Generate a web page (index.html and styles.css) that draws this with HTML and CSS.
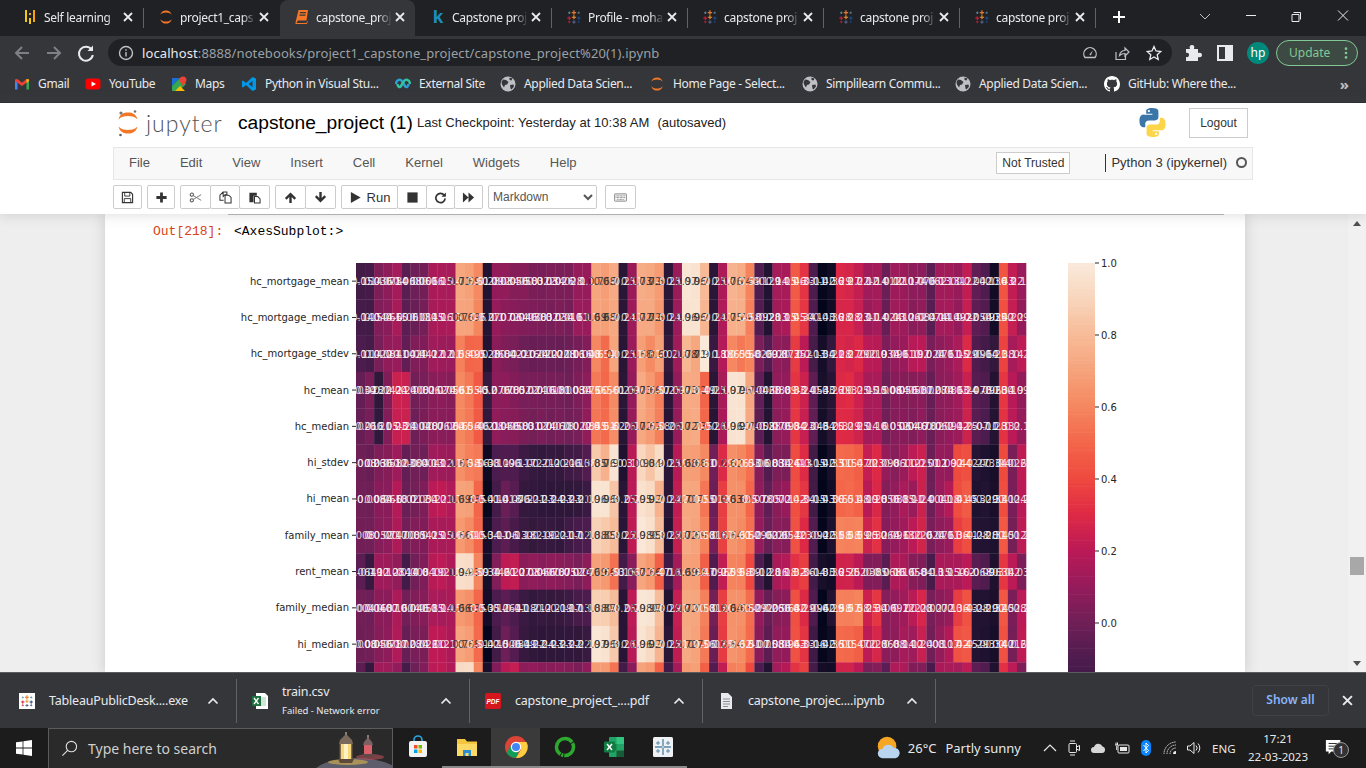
FILE: index.html
```html
<!DOCTYPE html>
<html lang="en">
<head>
    <meta charset="UTF-8">
    <title>capstone_project (1) - Jupyter Notebook</title>
    <link rel="stylesheet" href="styles.css">
</head>
<body>
    <!-- shared icons -->
    <svg class="defs" width="0" height="0">
        <symbol id="i-tableau" viewBox="0 0 18 18">
            <path d="M8.200 6.500V1.500h1.400v5zM6.400 3.400h5v1.300h-5z" fill="#e8762b"/>
            <path d="M8.300 16.500v-3.600h1.300v3.600zM7 14.100h3.900v1.200H7z" fill="#5b6591"/>
            <path d="M3 12.500V8.200h1.200v4.300zM1.500 9.700h4.200v1.200H1.500z" fill="#c72035"/>
            <path d="M13.800 12.500V8.200H15v4.300zM12.300 9.700h4.200v1.200h-4.200z" fill="#1f457e"/>
            <path d="M8.300 11.600V6.900h1.300v4.700zM6.600 8.600h4.800v1.200H6.600z" fill="#eb912b"/>
            <path d="M3.200 5.700V2.800h.9v2.900zM2.200 3.800h2.900v.9H2.200z" fill="#7099a6"/>
            <path d="M13.900 5.700V2.800h.9v2.900zM12.900 3.800h2.900v.9h-2.900z" fill="#59879b"/>
            <path d="M3.200 15.900V13h.9v2.900zM2.200 14h2.900v.9H2.200z" fill="#c72035"/>
            <path d="M13.900 15.900V13h.9v2.900zM12.900 14h2.900v.9h-2.900z" fill="#1f447e"/>
        </symbol>
        <symbol id="i-jupyter" viewBox="0 0 18 18">
            <path d="M2.500 6.600C3.500 3.200 6 1.600 9 1.600s5.500 1.600 6.500 5C14 4.800 11.800 4 9 4S4 4.800 2.500 6.600z" fill="#f37726"/>
            <path d="M2.500 11.400c1 3.400 3.500 5 6.500 5s5.500-1.600 6.500-5C14 13.200 11.800 14 9 14s-5-.8-6.500-2.600z" fill="#f37726"/>
        </symbol>
        <symbol id="i-globe" viewBox="0 0 16 16">
            <circle cx="8" cy="8" r="7.500" fill="#bdc1c6"/>
            <path d="M3 3.500l3 .5 2.500 2-1.500 2.500-2 .5-1 2.500L2 8.500 1.500 6zM9.500 1.500l3 1-1 2-2-.5zM10 9l3.500-.5.5 2-2.500 3-1-1z" fill="#35363a"/>
        </symbol>
        <symbol id="i-close" viewBox="0 0 10 10">
            <path d="M1 1l8 8M9 1L1 9" fill="none" stroke="currentColor" stroke-width="1.800"/>
        </symbol>
        <symbol id="i-caret" viewBox="0 0 12 8">
            <path d="M1.500 6.500L6 2l4.500 4.500" fill="none" stroke="currentColor" stroke-width="1.700"/>
        </symbol>
    </svg>

    <!-- browser tabs -->
    <div class="tabbar">
        <div class="tab">
            <svg class="favicon" viewBox="0 0 16 16"><rect x="3" y="1" width="2" height="12" fill="#f2c811"/><rect x="7" y="9" width="2" height="6" fill="#f2c811"/><rect x="7" y="4" width="2" height="2" fill="#e8a33d"/><rect x="11" y="1" width="2" height="12" fill="#f2a60c"/></svg>
            <span class="tab-title">Self learning</span>
            <svg class="tab-close"><use href="#i-close"/></svg>
        </div>
        <i class="tab-sep"></i>
        <div class="tab">
            <svg class="favicon"><use href="#i-jupyter"/></svg>
            <span class="tab-title">project1_caps</span>
            <svg class="tab-close"><use href="#i-close"/></svg>
        </div>
        <i class="tab-sep off"></i>
        <div class="tab active">
            <svg class="favicon" viewBox="0 0 16 16"><path d="M4.500 1H14l-1.500 10.500H4L2.500 14h9.800l1.200-2 .5.300-1.200 2.700H1.500v-1.500z" fill="#f37726"/><path d="M6 3h6l-.2 1.200h-6zM5.600 5.500h6l-.2 1.200h-6z" fill="#35363a"/></svg>
            <span class="tab-title">capstone_proj</span>
            <svg class="tab-close"><use href="#i-close"/></svg>
        </div>
        <i class="tab-sep off"></i>
        <div class="tab">
            <span class="favicon kaggle">k</span>
            <span class="tab-title">Capstone proj</span>
            <svg class="tab-close"><use href="#i-close"/></svg>
        </div>
        <i class="tab-sep"></i>
        <div class="tab">
            <svg class="favicon"><use href="#i-tableau"/></svg>
            <span class="tab-title">Profile - moha</span>
            <svg class="tab-close"><use href="#i-close"/></svg>
        </div>
        <i class="tab-sep"></i>
        <div class="tab">
            <svg class="favicon"><use href="#i-tableau"/></svg>
            <span class="tab-title">capstone proj</span>
            <svg class="tab-close"><use href="#i-close"/></svg>
        </div>
        <i class="tab-sep"></i>
        <div class="tab">
            <svg class="favicon"><use href="#i-tableau"/></svg>
            <span class="tab-title">capstone proj</span>
            <svg class="tab-close"><use href="#i-close"/></svg>
        </div>
        <i class="tab-sep"></i>
        <div class="tab">
            <svg class="favicon"><use href="#i-tableau"/></svg>
            <span class="tab-title">capstone proj</span>
            <svg class="tab-close"><use href="#i-close"/></svg>
        </div>
        <i class="tab-sep"></i>
        <svg class="new-tab" viewBox="0 0 46 36"><path d="M23 11v12M17 17h12" stroke="#fff" stroke-width="2"/></svg>
        <div class="win-controls">
            <svg viewBox="0 0 46 36"><path d="M18 14l5 5 5-5" fill="none" stroke="#bdc1c6"/></svg>
            <svg viewBox="0 0 46 36"><path d="M18 15.500h10" stroke="#e8eaed"/></svg>
            <svg viewBox="0 0 46 36"><path d="M19.500 12.500h7v7M18 14.500h7v7h-7z" fill="none" stroke="#e8eaed"/></svg>
            <svg viewBox="0 0 46 36"><path d="M18 10.500l10 10M28 10.500l-10 10" fill="none" stroke="#e8eaed"/></svg>
        </div>
    </div>

    <!-- address bar -->
    <div class="toolbar">
        <svg class="nav-btn" viewBox="0 0 32 32"><path d="M23 16H10M16 10l-6 6 6 6" fill="none" stroke="#7d8085" stroke-width="2"/></svg>
        <svg class="nav-btn" viewBox="0 0 32 32"><path d="M9 16h13M16 10l6 6-6 6" fill="none" stroke="#7d8085" stroke-width="2"/></svg>
        <svg class="nav-btn" viewBox="0 0 32 32"><path d="M21.500 12.500A7 7 0 1 0 22.800 18" fill="none" stroke="#e8eaed" stroke-width="2"/><path d="M23 8.500V14h-5.500z" fill="#e8eaed"/></svg>
        <div class="omnibox">
            <svg class="omni-info" viewBox="0 0 16 16"><circle cx="8" cy="8" r="6.500" fill="none" stroke="#bdc1c6" stroke-width="1.400"/><path d="M7.300 7h1.400v4.500H7.300zM7.300 4.300h1.400v1.400H7.300z" fill="#bdc1c6"/></svg>
            <span class="url"><b>localhost</b>:8888/notebooks/project1_capstone_project/capstone_project%20(1).ipynb</span>
            <div class="omni-actions">
                <svg viewBox="0 0 16 16"><path d="M3 12.500a6.200 6.200 0 1 1 10 0z" fill="none" stroke="#bdc1c6" stroke-width="1.300"/><path d="M7.300 9.500l3.500-4-1.900 5z" fill="#bdc1c6"/></svg>
                <svg viewBox="0 0 16 16"><path d="M2 7v7.500h9.500V11" fill="none" stroke="#bdc1c6" stroke-width="1.200"/><path d="M5.500 10.500c.5-3 2.500-5 5.500-5V3l4 4-4 4V8.500c-2.500 0-4 .5-5.500 2z" fill="none" stroke="#bdc1c6" stroke-width="1.200"/></svg>
                <svg viewBox="0 0 16 16"><path d="M8 1.500l2 4.500 4.800.5-3.600 3.200 1 4.800L8 12l-4.200 2.500 1-4.800L1.200 6.500 6 6z" fill="none" stroke="#e8eaed" stroke-width="1.300"/></svg>
            </div>
        </div>
        <svg class="nav-btn ext" viewBox="0 0 32 32"><path d="M9 12h4c-1-3 .5-4 2-4s3 1 2 4h4v4c3-1 4 .5 4 2s-1 3-4 2v4H9v-4c2 .5 3-.5 3-2s-1-2.500-3-2z" fill="#e8eaed"/></svg>
        <svg class="nav-btn" viewBox="0 0 32 32"><path d="M9 9h14v14H9z" fill="none" stroke="#e8eaed" stroke-width="2"/><path d="M16 9h7v14h-7z" fill="#e8eaed"/></svg>
        <span class="avatar">hp</span>
        <div class="update-btn">Update<svg viewBox="0 0 4 16"><circle cx="2" cy="3" r="1.500"/><circle cx="2" cy="8" r="1.500"/><circle cx="2" cy="13" r="1.500"/></svg></div>
    </div>

    <!-- bookmarks -->
    <div class="bookmarks">
        <a class="bm">
            <svg viewBox="0 0 16 16"><path d="M1 3.500v10h2.500V7z" fill="#4285f4"/><path d="M12.500 7v6.500H15v-10z" fill="#34a853"/><path d="M1 3.500L3.500 3 8 6.800 12.500 3l2.500.5v1.500L8 10 1 5z" fill="#ea4335"/><path d="M12.500 3L15 3.500V5l-2.500 2z" fill="#fbbc04"/></svg>
            Gmail
        </a>
        <a class="bm">
            <svg viewBox="0 0 16 16"><rect x="0.500" y="2.500" width="15" height="11" rx="3" fill="#f00"/><path d="M6.500 5.500L11 8l-4.500 2.500z" fill="#fff"/></svg>
            YouTube
        </a>
        <a class="bm">
            <svg viewBox="0 0 16 16"><path d="M1 2h8L1 10z" fill="#1a73e8" opacity=".9"/><path d="M1 10l8-8 6 6-7 7H1z" fill="#34a853"/><path d="M4 15l5-5 5 5z" fill="#fbbc04"/><path d="M12 0.500a3.500 3.500 0 0 1 3.500 3.500c0 2-2 3.500-3.500 6-1.500-2.500-3.500-4-3.500-6A3.500 3.500 0 0 1 12 .5z" fill="#ea4335"/></svg>
            Maps
        </a>
        <a class="bm">
            <svg viewBox="0 0 16 16"><path d="M11.500 1L15 2.500v11L11.500 15 5 9l-3 2.500L1 11V5l1-.5L5 7z" fill="#0098e6"/><path d="M11.500 5L7.800 8l3.700 3z" fill="#35363a"/></svg>
            Python in Visual Stu...
        </a>
        <a class="bm">
            <svg viewBox="0 0 16 16"><path d="M1 8a3.500 4.500 0 0 1 6.500-2L10 10a2 3 0 0 0 3.500-2" fill="none" stroke="#2a9fd8" stroke-width="2.500"/><path d="M15 8a3.500 4.500 0 0 0-6.500-2L6 10a2 3 0 0 1-3.500-2" fill="none" stroke="#34c3a0" stroke-width="2.500"/></svg>
            External Site
        </a>
        <a class="bm"><svg><use href="#i-globe"/></svg>Applied Data Scien...</a>
        <a class="bm"><svg><use href="#i-jupyter"/></svg>Home Page - Select...</a>
        <a class="bm"><svg><use href="#i-globe"/></svg>Simplilearn Commu...</a>
        <a class="bm"><svg><use href="#i-globe"/></svg>Applied Data Scien...</a>
        <a class="bm">
            <svg viewBox="0 0 16 16"><path fill="#fff" d="M8 0C3.580 0 0 3.580 0 8c0 3.540 2.290 6.530 5.470 7.590.4.070.55-.17.55-.38 0-.19-.01-.82-.01-1.490-2.010.37-2.530-.49-2.690-.94-.09-.23-.48-.94-.82-1.130-.28-.15-.68-.52-.01-.53.63-.01 1.080.58 1.230.82.72 1.210 1.870.87 2.330.66.07-.52.28-.87.51-1.070-1.780-.2-3.640-.89-3.640-3.950 0-.87.31-1.590.82-2.150-.08-.2-.36-1.020.08-2.120 0 0 .67-.21 2.200.82.64-.18 1.320-.27 2-.27.68 0 1.360.09 2 .27 1.530-1.040 2.200-.82 2.200-.82.44 1.100.16 1.920.08 2.120.51.56.82 1.270.82 2.150 0 3.070-1.870 3.750-3.650 3.950.29.25.54.73.54 1.480 0 1.070-.01 1.930-.01 2.200 0 .21.15.46.55.38A8.013 8.013 0 0016 8c0-4.420-3.580-8-8-8z"/></svg>
            GitHub: Where the...
        </a>
        <span class="bm-more">»</span>
    </div>

    <!-- jupyter header -->
    <header class="nb-header">
        <div class="nb-title-row">
            <svg class="jp-logo" viewBox="0 0 22 30">
                <path d="M1.500 11.500C3 6 6.500 4.500 11 4.500s8 1.500 9.500 7C18 8.800 15 8 11 8s-7 .8-9.500 3.500z" fill="#f37726"/>
                <path d="M1.500 18.500C3 24 6.500 25.500 11 25.500s8-1.500 9.500-7C18 21.200 15 22 11 22s-7-.8-9.500-3.500z" fill="#f37726"/>
                <circle cx="18" cy="3.500" r="1.300" fill="#767677"/><circle cx="4" cy="5" r="1.600" fill="#767677"/><circle cx="3.500" cy="27" r="1.300" fill="#616262"/>
            </svg>
            <span class="jp-word">jupyter</span>
            <span class="nb-name">capstone_project (1)</span>
            <span class="nb-check">Last Checkpoint: Yesterday at 10:38 AM</span>
            <span class="nb-saved">(autosaved)</span>
            <svg class="py-logo" viewBox="0 0 28 28">
                <path d="M13.800 0C7.500 0 7.900 2.700 7.900 2.700v2.800h6v.9H5.500S1.400 5.900 1.400 12.300s3.500 6.200 3.500 6.200H7v-3s-.1-3.500 3.500-3.500h5.900s3.300.1 3.300-3.200V3.400S20.300 0 13.800 0zM10.500 1.900a1.100 1.100 0 1 1 0 2.200 1.100 1.100 0 0 1 0-2.200z" fill="#3a76a8"/>
                <path d="M14.200 28c6.300 0 5.900-2.700 5.900-2.700v-2.800h-6v-.9h8.400s4.100.5 4.100-5.900-3.500-6.200-3.500-6.200H21v3s.1 3.500-3.500 3.500h-5.900s-3.300-.1-3.300 3.200v5.400S7.700 28 14.200 28zm3.300-1.900a1.100 1.100 0 1 1 0-2.200 1.100 1.100 0 0 1 0 2.200z" fill="#fdd548"/>
            </svg>
            <button class="logout">Logout</button>
        </div>
        <div class="menubar">
            <span class="menu-item">File</span>
            <span class="menu-item">Edit</span>
            <span class="menu-item">View</span>
            <span class="menu-item">Insert</span>
            <span class="menu-item">Cell</span>
            <span class="menu-item">Kernel</span>
            <span class="menu-item">Widgets</span>
            <span class="menu-item">Help</span>
            <span class="trust">Not Trusted</span>
            <span class="kernel">Python 3 (ipykernel)</span>
            <i class="kernel-dot"></i>
        </div>
        <div class="nb-tools">
            <div class="btn-group"><button class="tool w29"><svg viewBox="0 0 14 14"><path d="M1.500 1.500h9l2 2v9h-11z" fill="none" stroke="#333" stroke-width="1.200"/><path d="M4 2v3.500h5.500V2M3.500 12V8.200h7V12" fill="none" stroke="#333"/></svg></button></div>
            <div class="btn-group"><button class="tool w28"><svg viewBox="0 0 14 14"><path d="M5.500 1.500h3v4h4v3h-4v4h-3v-4h-4v-3h4z" fill="#333"/></svg></button></div>
            <div class="btn-group">
                <button class="tool w31"><svg viewBox="0 0 16 14"><circle cx="3.500" cy="3.500" r="2" fill="none" stroke="#555" stroke-width="1.300"/><circle cx="3.500" cy="10.500" r="2" fill="none" stroke="#555" stroke-width="1.300"/><path d="M5 4.500l10 6M5 9.500l10-6" stroke="#777" stroke-width="1.200"/></svg></button>
                <button class="tool w30"><svg viewBox="0 0 14 14"><path d="M4.500 1h4v3H6.500L4.500 6v-5zM4.500 1L1 4.500V10h4" fill="none" stroke="#333" stroke-width="1.100"/><path d="M6.500 4.500h4l2.500 2.500v6H6.500z" fill="#fff" stroke="#333" stroke-width="1.100"/></svg></button>
                <button class="tool w31"><svg viewBox="0 0 14 14"><path d="M1.500 2h8v3H6v7H1.500z" fill="#333"/><path d="M7 6h3.500l2.500 2.500V13H7z" fill="#fff" stroke="#333" stroke-width="1.100"/></svg></button>
            </div>
            <div class="btn-group">
                <button class="tool w31"><svg viewBox="0 0 14 14"><path d="M7 1.500L13 7.500l-1.800 1.800L8.300 6.500V13H5.700V6.500L2.800 9.300 1 7.500z" fill="#333"/></svg></button>
                <button class="tool w31"><svg viewBox="0 0 14 14"><path d="M7 12.500L13 6.500l-1.800-1.800-2.900 2.800V1H5.700v6.500L2.800 4.700 1 6.500z" fill="#333"/></svg></button>
            </div>
            <div class="btn-group">
                <button class="tool run"><svg viewBox="0 0 12 14"><path d="M1 1l10.500 6L1 13z" fill="#333"/></svg>Run</button>
                <button class="tool w30"><svg viewBox="0 0 14 14"><rect x="1.500" y="1.500" width="11" height="11" fill="#333"/></svg></button>
                <button class="tool w29"><svg viewBox="0 0 14 14"><path d="M11 4.500A5 5 0 1 0 12 8" fill="none" stroke="#333" stroke-width="1.800"/><path d="M12.800 1.500v4.700H8.100z" fill="#333"/></svg></button>
                <button class="tool w29"><svg viewBox="0 0 14 14"><path d="M1 1.500l6 5.500-6 5.500zM7 1.500l6 5.500-6 5.500z" fill="#333"/></svg></button>
            </div>
            <select class="cell-type"><option>Markdown</option></select>
            <div class="btn-group keyboard"><button class="tool w31"><svg viewBox="0 0 16 10"><rect x="0.500" y="0.500" width="15" height="9" rx="1" fill="#eee" stroke="#777"/><path d="M2 3h12M2 5h12M4 7.500h8" stroke="#777" stroke-dasharray="1 .7"/></svg></button></div>
        </div>
    </header>

    <!-- notebook body -->
    <main class="nb-body">
        <div class="nb-scroll">
            <div class="nb-page">
                <div class="cell-edge"></div>
                <div class="out-row">
                    <span class="out-prompt">Out[218]:</span>
                    <span class="out-text">&lt;AxesSubplot:&gt;</span>
                </div>
                <svg id="heatmap" class="heatmap" width="880" height="470"></svg>
            </div>
        </div>
        <div class="scrollbar">
            <i class="arrow up"></i>
            <i class="thumb"></i>
            <i class="arrow down"></i>
        </div>
    </main>

    <!-- downloads shelf -->
    <div class="shelf">
        <div class="dl">
            <svg class="dl-icon" viewBox="0 0 18 18"><rect x="1" y="1" width="16" height="16" fill="#fff"/><use href="#i-tableau" x="2" y="2" width="14" height="14"/></svg>
            <span class="dl-name">TableauPublicDesk....exe</span>
            <svg class="dl-caret"><use href="#i-caret"/></svg>
        </div>
        <div class="dl">
            <svg class="dl-icon" viewBox="0 0 18 18"><path d="M5 1h9l3 3v13H5z" fill="#fff"/><rect x="9" y="5" width="6" height="9" fill="#cfe5d6"/><rect x="1" y="4" width="9" height="10" fill="#1d6f42"/><path d="M3 6l4.500 6M7.500 6L3 12" stroke="#fff" stroke-width="1.300"/></svg>
            <div class="dl-stack">
                <span class="dl-file">train.csv</span>
                <span class="dl-error">Failed - Network error</span>
            </div>
            <svg class="dl-caret"><use href="#i-caret"/></svg>
        </div>
        <div class="dl">
            <svg class="dl-icon" viewBox="0 0 18 18"><rect x="1" y="1" width="16" height="16" rx="2" fill="#d5171d"/><text x="9" y="11.500" class="pdf-mark">PDF</text></svg>
            <span class="dl-name">capstone_project_....pdf</span>
            <svg class="dl-caret"><use href="#i-caret"/></svg>
        </div>
        <div class="dl">
            <svg class="dl-icon" viewBox="0 0 18 18"><path d="M4 1h7l4 4v12H4z" fill="#e8eaed"/><path d="M6 7h7M6 9.500h7M6 12h7M6 14.500h5" stroke="#80868b" stroke-width=".9"/></svg>
            <span class="dl-name">capstone_projec....ipynb</span>
            <svg class="dl-caret"><use href="#i-caret"/></svg>
        </div>
        <span class="show-all">Show all</span>
        <svg class="shelf-close"><use href="#i-close"/></svg>
    </div>

    <!-- windows taskbar -->
    <div class="taskbar">
        <div class="start">
            <svg viewBox="0 0 16 16"><path d="M0 2.300l6.600-.9v6.200H0zM7.400 1.300L16 0v7.600H7.400zM0 8.400h6.600v6.200L0 13.700zM7.400 8.400H16V16l-8.600-1.300z" fill="#fff"/></svg>
        </div>
        <div class="search">
            <svg class="search-icon" viewBox="0 0 18 18"><circle cx="11" cy="7" r="5.500" fill="none" stroke="#ddd" stroke-width="1.200"/><path d="M7 11l-5.500 5.500" stroke="#ddd" stroke-width="1.200"/></svg>
            <span>Type here to search</span>
            <svg class="lanterns" viewBox="0 0 78 39">
                <ellipse cx="42" cy="44" rx="42" ry="15" fill="#5d5d6b"/>
                <ellipse cx="34" cy="33" rx="20" ry="3" fill="#c9a94f" opacity=".7"/>
                <ellipse cx="56" cy="28" rx="14" ry="3" fill="#b5505a" opacity=".6"/>
                <path d="M32 5l6 6 1 4H25l1-4z" fill="#7a6a5c"/><rect x="31" y="3" width="2" height="3" fill="#8d7d6e"/>
                <rect x="26" y="15" width="12" height="15" fill="#f6d77c"/><rect x="30" y="15" width="4" height="15" fill="#fff3c4"/>
                <path d="M26 15v15M38 15v15" stroke="#5d4a3a" stroke-width="1.500"/>
                <path d="M24 30h16l-2 4H26z" fill="#5d4a3a"/>
                <path d="M54 8l4 5 1 3H49l1-3z" fill="#7a6060"/><rect x="53" y="6" width="2" height="3" fill="#8d7575"/>
                <rect x="50" y="16" width="8" height="9" fill="#d9606a"/><path d="M48.500 25h11l-1.500 3h-8z" fill="#5f4848"/>
            </svg>
        </div>
        <div class="task-icon">
            <svg viewBox="0 0 24 24"><path d="M8 7V5a4 4 0 0 1 8 0v2" fill="none" stroke="#29a8e0" stroke-width="1.600"/><rect x="3" y="6" width="18" height="16" rx="2" fill="#f3f3f3"/><rect x="8" y="10" width="3.500" height="3.500" fill="#f25022"/><rect x="12.500" y="10" width="3.500" height="3.500" fill="#7fba00"/><rect x="8" y="14.500" width="3.500" height="3.500" fill="#00a4ef"/><rect x="12.500" y="14.500" width="3.500" height="3.500" fill="#ffb900"/></svg>
        </div>
        <div class="task-icon running">
            <svg viewBox="0 0 24 24"><path d="M2 4h8l2 2.500h10V21H2z" fill="#f4c53f"/><path d="M2 9h20v12H2z" fill="#fbd965"/><path d="M8 21v-6h8v6h-2.500v-3h-3v3z" fill="#2a8dd4"/></svg>
        </div>
        <div class="task-icon running active">
            <svg viewBox="0 0 24 24"><circle cx="12" cy="12" r="11" fill="#db4437"/><path d="M12 23a11 11 0 0 1-9.500-5.500L8 8.500l4 7.500h3z" fill="#0f9d58"/><path d="M12 7h10.500A11 11 0 0 1 12 23l5-8.500z" fill="#ffcd40"/><circle cx="12" cy="12" r="5.200" fill="#fff"/><circle cx="12" cy="12" r="4" fill="#4285f4"/></svg>
        </div>
        <div class="task-icon running">
            <svg viewBox="0 0 24 24"><circle cx="12" cy="12" r="8.500" fill="none" stroke="#2fa82f" stroke-width="3.500" stroke-dasharray="14 1 2 1 30 1"/></svg>
        </div>
        <div class="task-icon running">
            <svg viewBox="0 0 24 24"><rect x="7" y="2" width="15" height="20" rx="1" fill="#21a366"/><path d="M14.500 2H21a1 1 0 0 1 1 1v6h-7.500z" fill="#33c481"/><path d="M14.500 15.500H22V21a1 1 0 0 1-1 1h-6.500z" fill="#185c37"/><rect x="7" y="9" width="7.500" height="6.500" fill="#107c41"/><rect x="2" y="6.500" width="11" height="11" rx="1" fill="#107c41"/><path d="M5 9l5 6M10 9l-5 6" stroke="#fff" stroke-width="1.500"/></svg>
        </div>
        <div class="task-icon running">
            <svg viewBox="0 0 24 24"><rect x="2" y="2" width="20" height="20" rx="1.500" fill="#eef2f5"/><path d="M11.300 4v16h1.400V4zM4 11.300h16v1.400H4z" fill="#5b88a8"/><path d="M7 6v4M5 8h4M17 6v4M15 8h4M7 14v4M5 16h4M17 14v4M15 16h4" stroke="#5b88a8"/></svg>
        </div>
        <div class="tray">
            <svg class="weather" viewBox="0 0 28 28"><circle cx="13" cy="12" r="10" fill="#f5a623"/><path d="M8 25a5 5 0 0 1 0-10 6.500 6.500 0 0 1 12-1 5.500 5.500 0 0 1 2 11z" fill="#b9d4ef"/></svg>
            <span class="temp">26°C</span>
            <span class="cond">Partly sunny</span>
            <svg class="tray-icon" viewBox="0 0 16 16"><path d="M2 11l6-6 6 6" fill="none" stroke="#e8e8e8" stroke-width="1.200"/></svg>
            <svg class="tray-icon" viewBox="0 0 16 16"><rect x="3" y="3.500" width="7.500" height="9" rx="1" fill="none" stroke="#e8e8e8"/><path d="M10.500 7l3-1.500v5l-3-1.500zM4 1h5M4 15h5" fill="none" stroke="#e8e8e8"/></svg>
            <svg class="tray-icon" viewBox="0 0 16 16"><path d="M4 13a3 3 0 0 1 0-6 4.500 4.500 0 0 1 8.500-.5A3.300 3.300 0 0 1 12 13z" fill="#d6d6d6"/></svg>
            <svg class="tray-icon" viewBox="0 0 16 16"><rect x="4" y="5" width="11" height="8" rx="1" fill="none" stroke="#e8e8e8"/><rect x="6" y="7" width="7" height="4" fill="#e8e8e8"/><path d="M1 5h3M2 2.500V5M3.500 2.500V5M2.700 6v4" stroke="#e8e8e8"/></svg>
            <svg class="tray-icon" viewBox="0 0 16 16"><rect x="3" y="0" width="10" height="16" rx="5" fill="#0a84ff"/><path d="M5.500 5l5 5.500L8 13V3l2.500 2.500-5 5.500" fill="none" stroke="#fff"/></svg>
            <svg class="tray-icon" viewBox="0 0 16 16"><path d="M2 14a12 12 0 0 1 12-12M5 14a9 9 0 0 1 9-9M8 14a6 6 0 0 1 6-6" fill="none" stroke="#cfcfcf" stroke-dasharray="1.500 .6"/><path d="M11 14a3 3 0 0 1 3-3v3z" fill="#e8e8e8"/></svg>
            <svg class="tray-icon" viewBox="0 0 16 16"><path d="M1.500 6h2.500L8 2.500v11L4 10H1.500z" fill="none" stroke="#e8e8e8"/><path d="M10 5.500a3.500 3.500 0 0 1 0 5M12 3.500a6.500 6.500 0 0 1 0 9" fill="none" stroke="#e8e8e8"/></svg>
            <span class="lang">ENG</span>
            <div class="clock"><span>17:21</span><span>22-03-2023</span></div>
            <div class="notif">
                <svg viewBox="0 0 20 20"><path d="M1 1h16v13H7l-3 3v-3H1z" fill="#fff"/><path d="M4 5h10M4 8h10M4 11h7" stroke="#1c1c1c"/></svg>
                <span class="badge">1</span>
            </div>
        </div>
    </div>

    <script src="heatmap.js"></script>
</body>
</html>
```

FILE: styles.css
```css
* {
    box-sizing: border-box;
}
body {
    margin: 0;
    height: 100vh;
    display: flex;
    flex-direction: column;
    overflow: hidden;
    font-family: "Noto Sans", sans-serif;
    font-size: 12px;
    color: #e8eaed;
    background: #eee;
}
.defs {
    display: block;
    height: 0;
}

/* browser tabs */
.tabbar {
    height: 36px;
    flex: none;
    display: flex;
    align-items: stretch;
    padding-left: 8px;
    background: #202124;
}
.tab {
    width: 135px;
    display: flex;
    align-items: center;
    padding: 0 0 2px 14px;
    border-radius: 8px 8px 0 0;
}
.tab.active {
    background: #35363a;
}
.tab-sep {
    width: 1px;
    height: 20px;
    align-self: center;
    background: #5f6368;
}
.tab-sep.off {
    background: transparent;
}
.favicon {
    width: 16px;
    height: 16px;
    flex: none;
}
.kaggle {
    color: #1b8fbf;
    font: bold 19px/16px "Liberation Sans", sans-serif;
    text-align: center;
}
.tab-title {
    width: 76px;
    margin-left: 6px;
    white-space: nowrap;
    overflow: hidden;
    letter-spacing: -0.3px;
    -webkit-mask-image: linear-gradient(90deg, #000 82%, transparent);
    mask-image: linear-gradient(90deg, #000 82%, transparent);
}
.tab-close {
    width: 10px;
    height: 10px;
    margin-left: 3px;
    color: #e8eaed;
}
.new-tab {
    width: 46px;
    height: 36px;
}
.win-controls {
    margin-left: auto;
    display: flex;
}
.win-controls svg {
    width: 46px;
    height: 36px;
}

/* address bar */
.toolbar {
    height: 33px;
    flex: none;
    display: flex;
    align-items: center;
    padding-left: 6px;
    background: #35363a;
}
.nav-btn {
    width: 32px;
    height: 32px;
    flex: none;
}
.omnibox {
    width: 1064px;
    height: 27px;
    margin-left: 6px;
    display: flex;
    align-items: center;
    padding-left: 10px;
    border-radius: 14px;
    background: #202124;
}
.omni-info {
    width: 16px;
    height: 16px;
}
.url {
    margin-left: 8px;
    font-size: 13px;
    color: #9aa0a6;
    letter-spacing: 0.1px;
    white-space: nowrap;
}
.url b {
    font-weight: 400;
    color: #e8eaed;
}
.omni-actions {
    margin-left: auto;
    display: flex;
    gap: 16px;
    padding-right: 10px;
}
.omni-actions svg {
    width: 16px;
    height: 16px;
}
.nav-btn.ext {
    margin-left: 5px;
}
.avatar {
    width: 22px;
    height: 22px;
    margin-left: 6px;
    border-radius: 50%;
    background: #00897b;
    color: #fff;
    font-size: 12px;
    line-height: 21px;
    text-align: center;
}
.update-btn {
    width: 82px;
    height: 26px;
    margin-left: 7px;
    display: flex;
    align-items: center;
    justify-content: space-between;
    padding: 0 9px 0 12px;
    border: 1px solid #81c995;
    border-radius: 13px;
    background: #3d4a43;
    color: #81c995;
}
.update-btn svg {
    width: 4px;
    height: 14px;
    fill: #81c995;
}

/* bookmarks */
.bookmarks {
    height: 34px;
    flex: none;
    display: grid;
    grid-template-columns: 71px 86px 70px 154px 105px 149px 153px 153px 149px 215px 1fr;
    align-items: center;
    padding: 0 0 4px 14px;
    background: #35363a;
    border-bottom: 1px solid #2b2c2f;
}
.bm {
    display: flex;
    align-items: center;
    gap: 8px;
    white-space: nowrap;
    letter-spacing: -0.32px;
    color: #e8eaed;
}
.bm svg {
    width: 16px;
    height: 16px;
    flex: none;
}
.bm-more {
    justify-self: end;
    margin-right: 17px;
    font-size: 15px;
    font-weight: 700;
    color: #bdc1c6;
}

/* jupyter header */
.nb-header {
    height: 111px;
    flex: none;
    position: relative;
    z-index: 2;
    background: #fff;
    color: #333;
    font-family: "Liberation Sans", Arial, sans-serif;
    box-shadow: 0 0 12px 1px rgba(87, 87, 87, 0.2);
}
.nb-title-row {
    height: 44px;
    display: flex;
    align-items: center;
    padding: 0 0 5px 117px;
}
.jp-logo {
    width: 22px;
    height: 30px;
}
.jp-word {
    width: 92px;
    margin-left: 7px;
    font: 300 23px "Lato", sans-serif;
    letter-spacing: 1px;
    color: #555;
}
.nb-name {
    font-size: 19.2px;
    color: #000;
}
.nb-check {
    margin-left: 4px;
    font-size: 13px;
    letter-spacing: 0.05px;
    color: #222;
}
.nb-saved {
    margin-left: 8px;
    font-size: 13px;
    color: #222;
}
.py-logo {
    width: 29px;
    height: 29px;
    margin-left: auto;
}
.logout {
    width: 59px;
    height: 30px;
    margin: 0 118px 0 22px;
    border: 1px solid #ccc;
    background: #fff;
    color: #333;
    font: 12px "Liberation Sans", sans-serif;
}
.menubar {
    width: 1140px;
    height: 33px;
    margin-left: 113px;
    display: flex;
    align-items: center;
    padding-bottom: 2px;
    border: 1px solid #e7e7e7;
    background: #f8f8f8;
    font-size: 13px;
    color: #555;
}
.menu-item {
    margin: 0 15px;
}
.trust {
    margin-left: auto;
    padding: 3px 5px;
    border: 1px solid #ccc;
    background: #fff;
    font-size: 12px;
    color: #333;
}
.kernel {
    margin-left: 35px;
    padding-left: 5px;
    border-left: 1px solid #333;
    color: #333;
    line-height: 18px;
    font-size: 13px;
    white-space: nowrap;
}
.kernel-dot {
    width: 11px;
    height: 11px;
    margin: 0 5px 0 9px;
    border: 2px solid #555;
    border-radius: 50%;
}
.nb-tools {
    display: flex;
    align-items: center;
    gap: 5px;
    margin: 5px 0 0 113px;
}
.btn-group {
    display: flex;
}
.btn-group.keyboard {
    margin-left: 3px;
}
.tool {
    height: 24px;
    display: flex;
    align-items: center;
    justify-content: center;
    gap: 5px;
    padding: 0;
    margin-right: -1px;
    border: 1px solid #ccc;
    border-radius: 2px;
    background: #fff;
    color: #333;
    font: 13px "Liberation Sans", sans-serif;
}
.tool:last-child {
    margin-right: 0;
}
.tool svg {
    width: 13px;
    height: 13px;
}
.w28 {
    width: 28px;
}
.w29 {
    width: 29px;
}
.w30 {
    width: 30px;
}
.w31 {
    width: 31px;
}
.tool.run {
    width: 57px;
}
.cell-type {
    width: 109px;
    height: 24px;
    border: 1px solid #ccc;
    border-radius: 2px;
    background: #fff;
    color: #555;
    font: 12px "Liberation Sans", sans-serif;
}

/* notebook body */
.nb-body {
    flex: 1;
    min-height: 0;
    display: flex;
}
.nb-scroll {
    flex: 1;
    overflow: hidden;
    padding-left: 105px;
}
.nb-page {
    width: 1140px;
    height: 100%;
    padding-left: 123px;
    background: #fff;
    box-shadow: 0 0 12px 1px rgba(87, 87, 87, 0.2);
}
.cell-edge {
    width: 996px;
    height: 1px;
    background: #bbb;
}
.out-row {
    margin-left: -75px;
    padding-top: 8px;
    display: flex;
    font: 13px/17px "Liberation Mono", monospace;
    color: #000;
}
.out-prompt {
    width: 81px;
    color: #d84315;
}
.heatmap {
    display: block;
    margin: 15px 0 0 6px;
    overflow: visible;
}
.heatmap text {
    font-family: "DejaVu Sans", sans-serif;
    font-size: 10px;
}
.scrollbar {
    width: 18px;
    flex: none;
    display: flex;
    flex-direction: column;
    align-items: center;
    padding: 7px 0 6px;
    background: #f1f1f1;
}
.arrow {
    width: 0;
    height: 0;
    border-left: 4px solid transparent;
    border-right: 4px solid transparent;
}
.arrow.up {
    border-bottom: 5px solid #505050;
}
.arrow.down {
    margin-top: auto;
    border-top: 5px solid #505050;
}
.thumb {
    width: 14px;
    height: 18px;
    margin-top: 331px;
    background: #a8a8a8;
}

/* downloads shelf */
.shelf {
    height: 56px;
    flex: none;
    position: relative;
    z-index: 2;
    display: flex;
    align-items: center;
    padding-left: 4px;
    background: #35363a;
    border-top: 1px solid #5a5b5e;
}
.dl {
    width: 233px;
    height: 44px;
    display: flex;
    align-items: center;
    padding-left: 14px;
    border-right: 1px solid #5f6368;
}
.dl-icon {
    width: 18px;
    height: 18px;
    flex: none;
}
.pdf-mark {
    fill: #fff;
    font: italic bold 6.500px "Liberation Sans", sans-serif;
    text-anchor: middle;
}
.dl-name {
    margin-left: 13px;
    font-size: 12.500px;
    white-space: nowrap;
    letter-spacing: -0.2px;
}
.dl-stack {
    margin-left: 13px;
    display: flex;
    flex-direction: column;
    gap: 4px;
    padding-bottom: 2px;
}
.dl-file {
    font-size: 12.500px;
    letter-spacing: -0.2px;
}
.dl-error {
    font-size: 9.500px;
}
.dl-caret {
    width: 12px;
    height: 8px;
    margin: 0 17px 0 auto;
    color: #e8eaed;
}
.show-all {
    width: 77px;
    height: 31px;
    margin-left: auto;
    border: 1px solid #3f4145;
    border-radius: 4px;
    color: #8ab4f8;
    font-weight: 600;
    line-height: 28px;
    text-align: center;
}
.shelf-close {
    width: 11px;
    height: 11px;
    margin: 0 13px;
    color: #e8eaed;
}

/* windows taskbar */
.taskbar {
    height: 40px;
    flex: none;
    display: flex;
    align-items: stretch;
    background: #1c1c1c;
    color: #e8e8e8;
}
.start {
    width: 48px;
    display: flex;
    align-items: center;
    justify-content: center;
}
.start svg {
    width: 16px;
    height: 16px;
}
.search {
    width: 345px;
    display: flex;
    align-items: center;
    padding-left: 12px;
    border: 1px solid #5c5c5c;
    border-bottom: 0;
    background: #2a2a2a;
    overflow: hidden;
    font-size: 14px;
    color: #cfcfcf;
}
.search-icon {
    width: 17px;
    height: 17px;
    margin-right: 10px;
}
.lanterns {
    width: 78px;
    height: 39px;
    margin-left: auto;
    flex: none;
}
.task-icon {
    width: 49px;
    display: flex;
    align-items: center;
    justify-content: center;
    border-bottom: 2px solid transparent;
}
.task-icon svg {
    width: 24px;
    height: 24px;
}
.task-icon.running {
    border-bottom-color: #8a8a8a;
}
.task-icon.active {
    background: #3a3a3a;
}
.tray {
    margin-left: auto;
    display: flex;
    align-items: center;
}
.weather {
    width: 26px;
    height: 26px;
}
.temp {
    margin-left: 7px;
    font-size: 13px;
}
.cond {
    margin: 0 17px 0 9px;
    font-size: 13px;
}
.tray-icon {
    width: 24px;
    height: 16px;
}
.lang {
    width: 24px;
    margin-left: 6px;
    font-size: 11.500px;
}
.clock {
    width: 76px;
    margin-left: 4px;
    padding-bottom: 1px;
    display: flex;
    flex-direction: column;
    gap: 3px;
    align-items: center;
    font-size: 11.500px;
    line-height: 15px;
}
.notif {
    width: 50px;
    display: flex;
    align-items: center;
    padding-left: 9px;
    position: relative;
}
.notif svg {
    width: 18px;
    height: 18px;
}
.badge {
    position: absolute;
    left: 17px;
    top: 3px;
    width: 16px;
    height: 16px;
    border: 1px solid #999;
    border-radius: 50%;
    background: #333;
    font-size: 10px;
    line-height: 14px;
    text-align: center;
}
```

FILE: heatmap.js
```js
// correlation heatmap, values read off per row group
const A = [-.14,-.14,.04,.07,.14,-.06,-.01,.01,.15,.15,.15,.71,.69,.6,-.28,.1,.08,.06,.05,.03,.03,.03,.03,.02,.1,.11,.7,.68,.72,-.25,.12,.73,.72,.66,-.25,.12,.97,.96,.78,-.25,.17,.76,.74,.58,-.1,-.28,.14,.15,.45,.33,-.1,-.42,-.36,.28,.27,.23,.12,.14,-.02,.12,.12,.07,.08,-.07,.13,.14,.1,.22,-.05,-.1,-.35,.43,.22,.1];
const B = [-.12,-.14,.03,.08,.11,-.05,.04,.05,.12,.12,.1,.58,.5,.5,-.28,.06,.04,.03,-.02,-.02,-.03,-.02,-.02,-.02,.02,.04,.6,.52,.7,-.25,.1,.68,.62,.68,-.2,.12,.78,.72,.98,-.18,.17,.6,.56,.58,.03,-.1,.08,.08,.35,.2,-.14,-.34,-.2,.28,.27,.28,.2,.2,.03,.1,.1,.19,.21,.02,.08,.1,.15,.3,-.1,-.14,-.22,.38,.15,.2];
const C = [-.03,.02,-.22,.05,.24,.24,0,.02,.07,.07,.06,.6,.55,.46,-.2,.08,.07,.05,.03,.02,.02,.01,.01,0,.03,.08,.55,.5,.62,-.25,.1,.72,.66,.58,-.25,.1,.72,.72,.5,-.25,.15,.96,.96,.72,-.05,-.28,.08,.09,.34,.24,-.05,-.34,-.26,.3,.3,.25,.14,.15,0,.06,.06,.05,.07,-.02,.07,.09,.12,.24,-.07,-.1,-.28,.33,.19,.1];
const D = [0,-.03,.04,.05,.12,-.03,0,0,.12,.12,.12,.62,.58,.55,-.38,-.1,-.1,-.1,-.18,-.2,-.2,-.2,-.2,-.17,-.15,-.08,.85,.76,.96,-.3,.2,.9,.84,.92,-.25,.2,.68,.68,.6,0,.3,.62,.6,.52,.06,-.08,.03,.03,.4,.3,-.14,-.42,-.33,.5,.5,.48,.22,.3,.09,.06,.12,.2,.25,-.02,.1,.1,.4,.42,-.28,-.3,-.33,.4,.03,.2];
const E = [0,0,.06,.07,.17,-.02,.02,.03,.2,.2,.17,.7,.68,.5,-.42,-.14,-.01,-.08,-.2,-.22,-.23,-.23,-.23,-.23,-.22,-.18,.97,.96,.84,-.26,.2,.96,.92,.76,-.25,.22,.72,.7,.55,-.02,.36,.64,.62,.5,.07,-.05,.08,.1,.42,.33,-.15,-.42,-.36,.5,.5,.48,.2,.28,.06,.08,.15,.12,.24,0,.1,.18,.42,.45,-.3,-.3,-.33,.42,.02,.2];
const F = [0,0,.06,.07,.17,0,.05,.05,.15,.15,.15,.66,.62,.5,-.34,-.12,-.06,-.12,-.18,-.2,-.2,-.2,-.2,-.17,-.12,-.12,.88,.86,.8,-.25,.2,.98,.96,.8,-.28,.22,.72,.7,.58,.02,.36,.64,.62,.52,.1,-.03,.06,.06,.42,.3,-.1,-.42,-.3,.58,.58,.58,.25,.33,.06,.1,.12,.2,.27,.02,.08,.1,.36,.42,-.28,-.28,-.32,.45,.02,.2];
const G = [-.06,-.2,.12,.13,.08,-.14,0,.04,.2,.2,.17,.93,.93,.6,-.34,.05,.2,.22,.08,.08,.07,.07,.07,.06,.02,.08,.68,.66,.54,-.15,.07,.7,.66,.48,-.16,.14,.68,.68,.48,-.1,.22,.58,.58,.4,-.12,-.28,.15,.18,.33,.36,-.14,-.34,-.36,.26,.25,.2,.03,.05,-.06,.16,.16,.05,.04,-.12,.15,.15,.15,.2,-.06,-.1,-.3,.33,.2,.04];

const rows = [A, A, B, C, C, D, E, F, G, F, E, G];
const labels = ['hc_mortgage_mean', 'hc_mortgage_median', 'hc_mortgage_stdev', 'hc_mean', 'hc_median',
    'hi_stdev', 'hi_mean', 'family_mean', 'rent_mean', 'family_median', 'hi_median'];

// rocket colormap, from value to colour
const stops = [[-.43,'#03051a'],[-.3,'#1f1230'],[-.2,'#35193e'],[-.1,'#4f1c50'],[0,'#701f57'],[.1,'#961b5b'],[.2,'#bb1a56'],
    [.3,'#df2a45'],[.4,'#ee4a3f'],[.5,'#f3674a'],[.6,'#f58860'],[.7,'#f6a47c'],[.8,'#f7bc99'],[.9,'#f8d6bd'],[1,'#faebdd']];

function rgb(hex) {
    return [1, 3, 5].map(i => parseInt(hex.substr(i, 2), 16));
}

function colour(v) {
    let i = 0;
    while (i < stops.length - 2 && v > stops[i + 1][0]) i++;
    const t = Math.min(1, Math.max(0, (v - stops[i][0]) / (stops[i + 1][0] - stops[i][0])));
    const a = rgb(stops[i][1]);
    const b = rgb(stops[i + 1][1]);
    return 'rgb(' + a.map((x, k) => Math.round(x + (b[k] - x) * t)).join(',') + ')';
}

// plot position inside the svg
const left = 122, top_ = 8, cw = 670 / 74, ch = 36.3;
const barX = 834, barW = 27, perUnit = 360;
let cells = '';
let notes = '';

rows.forEach((row, r) => {
    row.forEach((base, c) => {
        const v = base + (((r * 7 + c * 13) % 5) - 2) * 0.004;
        const x = left + c * cw;
        const y = top_ + r * ch;
        cells += `<rect x="${x.toFixed(2)}" y="${y.toFixed(2)}" width="${(cw + .3).toFixed(2)}" height="${ch + .3}" fill="${colour(v)}"/>`;
        notes += `<text x="${(x + cw / 2).toFixed(1)}" y="${(y + ch / 2 + 4).toFixed(1)}" text-anchor="middle" fill="${v > .62 ? '#262626' : '#fff'}" fill-opacity=".8">${Number(v.toPrecision(2))}</text>`;
    });
});

let axis = '';
labels.forEach((name, r) => {
    const y = top_ + (r + .5) * ch;
    axis += `<path d="M${left - 4} ${y}H${left}" stroke="#262626"/>`;
    axis += `<text x="${left - 7}" y="${y + 3.500}" text-anchor="end" fill="#262626">${name}</text>`;
});

// colour bar
let bar = '';
for (let v = -.43; v < 1; v += .01) {
    bar += `<rect x="${barX}" y="${(top_ + (1 - v - .01) * perUnit).toFixed(1)}" width="${barW}" height="4.2" fill="${colour(v)}"/>`;
}
[1, .8, .6, .4, .2, 0].forEach(v => {
    const y = top_ + (1 - v) * perUnit;
    axis += `<path d="M${barX + barW} ${y}h4" stroke="#262626"/>`;
    axis += `<text x="${barX + barW + 6}" y="${y + 3.500}" fill="#262626">${v.toFixed(1)}</text>`;
});

document.getElementById('heatmap').innerHTML = cells + notes + bar + axis;
```
